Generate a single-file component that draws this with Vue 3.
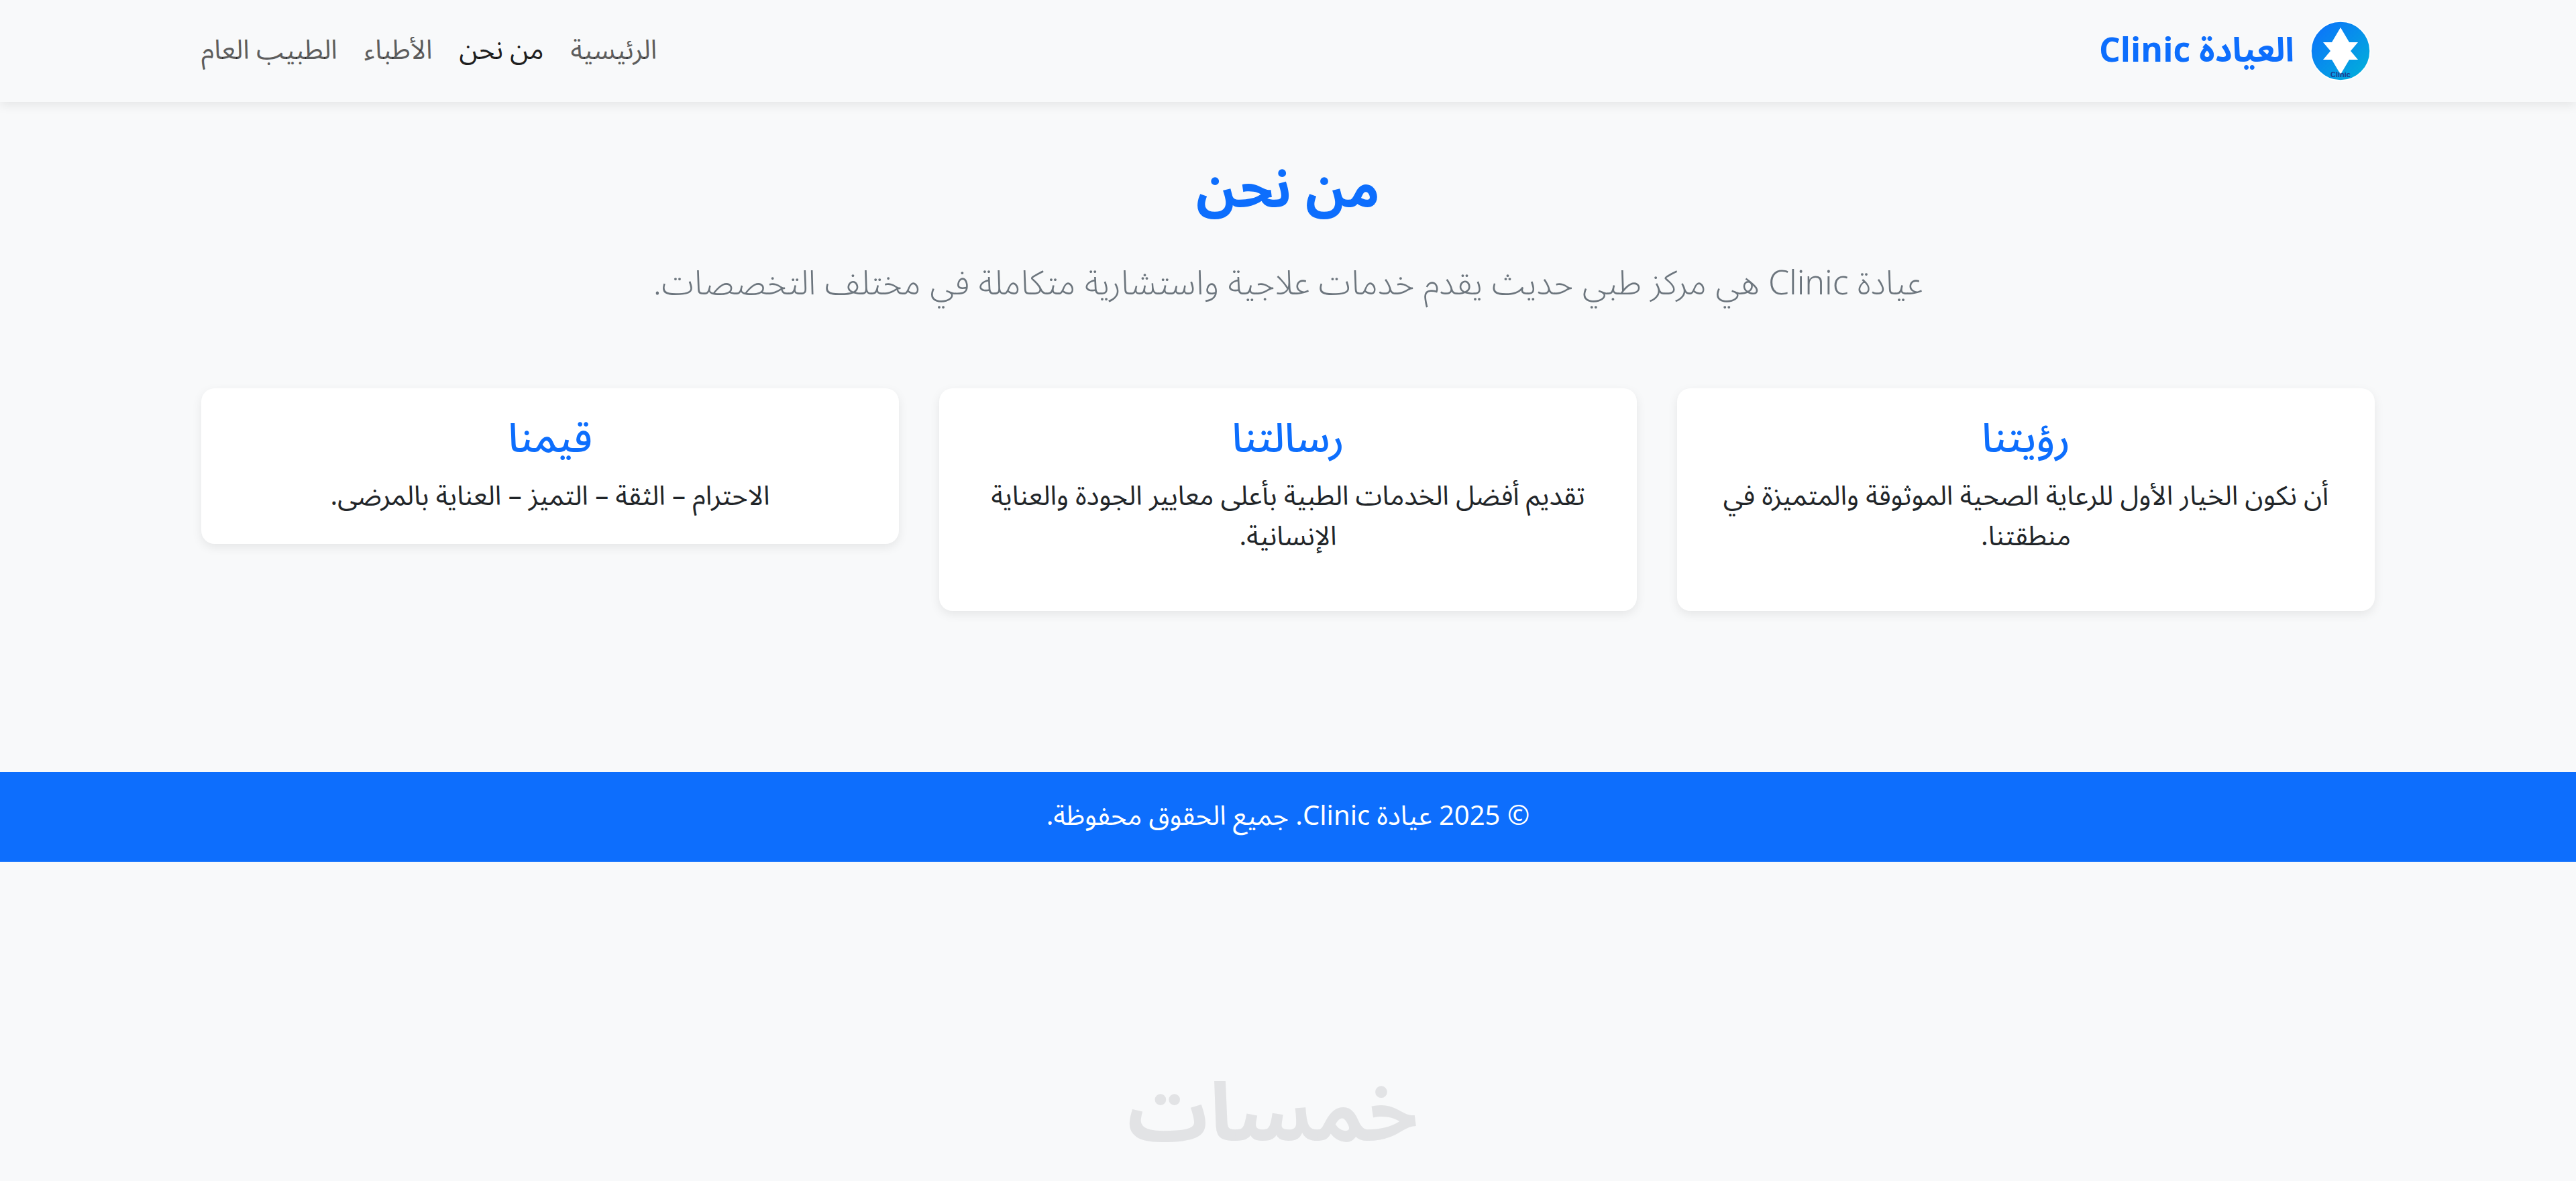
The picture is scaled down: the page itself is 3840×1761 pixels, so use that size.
<template>
  <div class="page" dir="rtl">
    <nav class="navbar">
      <a class="brand" href="#">
        <svg class="brand__logo" viewBox="0 0 90 90" width="90" height="90">
          <defs>
            <linearGradient id="logoGrad" x1="0" y1="0" x2="1" y2="1">
              <stop offset="0" stop-color="#0d6efd" />
              <stop offset="1" stop-color="#00b4d8" />
            </linearGradient>
          </defs>
          <circle cx="45" cy="45" r="44" fill="url(#logoGrad)" stroke="#fff" stroke-width="1.5" />
          <polygon points="45,17 58,39 71,39 60,52 71,65 58,65 45,87 32,65 19,65 30,52 19,39 32,39" transform="translate(0 -7)" fill="#fff" />
          <text x="45" y="84" text-anchor="middle" class="brand__logo-text">Clinic</text>
        </svg>
        <span>العيادة Clinic</span>
      </a>
      <ul class="nav-links">
        <li v-for="link in links" :key="link.label">
          <a href="#" :class="{ active: link.active }">{{ link.label }}</a>
        </li>
      </ul>
    </nav>

    <main class="about">
      <h1 class="about__title">من نحن</h1>
      <p class="about__lead">عيادة Clinic هي مركز طبي حديث يقدم خدمات علاجية واستشارية متكاملة في مختلف التخصصات.</p>

      <div class="cards">
        <div v-for="card in cards" :key="card.title" class="card">
          <h4>{{ card.title }}</h4>
          <p>{{ card.text }}</p>
        </div>
      </div>
    </main>

    <footer class="footer">© 2025 عيادة Clinic. جميع الحقوق محفوظة.</footer>

    <div class="watermark">خمسات</div>
  </div>
</template>

<script setup>
const links = [
  { label: "الرئيسية" },
  { label: "من نحن", active: true },
  { label: "الأطباء" },
  { label: "الطبيب العام" },
]

const cards = [
  { title: "رؤيتنا", text: "أن نكون الخيار الأول للرعاية الصحية الموثوقة والمتميزة في منطقتنا." },
  { title: "رسالتنا", text: "تقديم أفضل الخدمات الطبية بأعلى معايير الجودة والعناية الإنسانية." },
  { title: "قيمنا", text: "الاحترام – الثقة – التميز – العناية بالمرضى." },
]
</script>

<style>
html, body {
  background: #f8f9fa;
}
</style>

<style scoped>
.page {
  position: relative;
  min-height: 1761px;
  overflow: hidden;
  background: #f8f9fa;
  color: #212529;
  font-family: "Noto Sans Arabic", "Noto Sans", "DejaVu Sans", sans-serif;
  font-size: 40px;
  line-height: 1.5;
}

.navbar {
  height: 152px;
  box-sizing: border-box;
  padding: 0 306px 0 300px;
  display: flex;
  align-items: center;
  justify-content: space-between;
  box-shadow: 0 5px 15px rgba(0, 0, 0, .08);
}

.brand {
  display: flex;
  align-items: center;
  gap: 24px;
  color: #0d6efd;
  font-size: 50px;
  font-weight: 700;
  text-decoration: none;
}

.brand__logo-text {
  font-family: "Liberation Sans", sans-serif;
  font-size: 11px;
  font-weight: 700;
  fill: #1e3a8a;
}

.nav-links {
  display: flex;
  gap: 40px;
  margin: 0;
  padding: 0;
  list-style: none;
}

.nav-links a {
  color: rgba(0, 0, 0, .65);
  text-decoration: none;
}

.nav-links a.active {
  color: rgba(0, 0, 0, .9);
}

.about {
  padding: 84px 300px 0;
  text-align: center;
}

.about__title {
  margin: 0 0 54px;
  color: #0d6efd;
  font-size: 80px;
  font-weight: 700;
  line-height: 1.2;
}

.about__lead {
  margin: 0 0 118px;
  color: #6c757d;
  font-size: 50px;
  font-weight: 300;
}

.cards {
  display: grid;
  grid-template-columns: repeat(3, 1fr);
  gap: 60px;
  align-items: start;
  margin-bottom: 240px;
}

.card {
  padding: 40px;
  background: #fff;
  border-radius: 20px;
  box-shadow: 0 5px 15px rgba(0, 0, 0, .08);
}

.card h4 {
  margin: 0 0 20px;
  color: #0d6efd;
  font-size: 60px;
  font-weight: 500;
  line-height: 1.2;
}

.card p {
  margin: 0 0 40px;
}

.card:last-child p {
  margin-bottom: 0;
}

.footer {
  padding: 37px 0;
  background: #0d6efd;
  color: #fff;
  text-align: center;
}

.watermark {
  position: absolute;
  left: 1680px;
  top: 1590px;
  color: #e2e3e5;
  font-size: 120px;
  font-weight: 700;
  line-height: 1.2;
}
</style>
